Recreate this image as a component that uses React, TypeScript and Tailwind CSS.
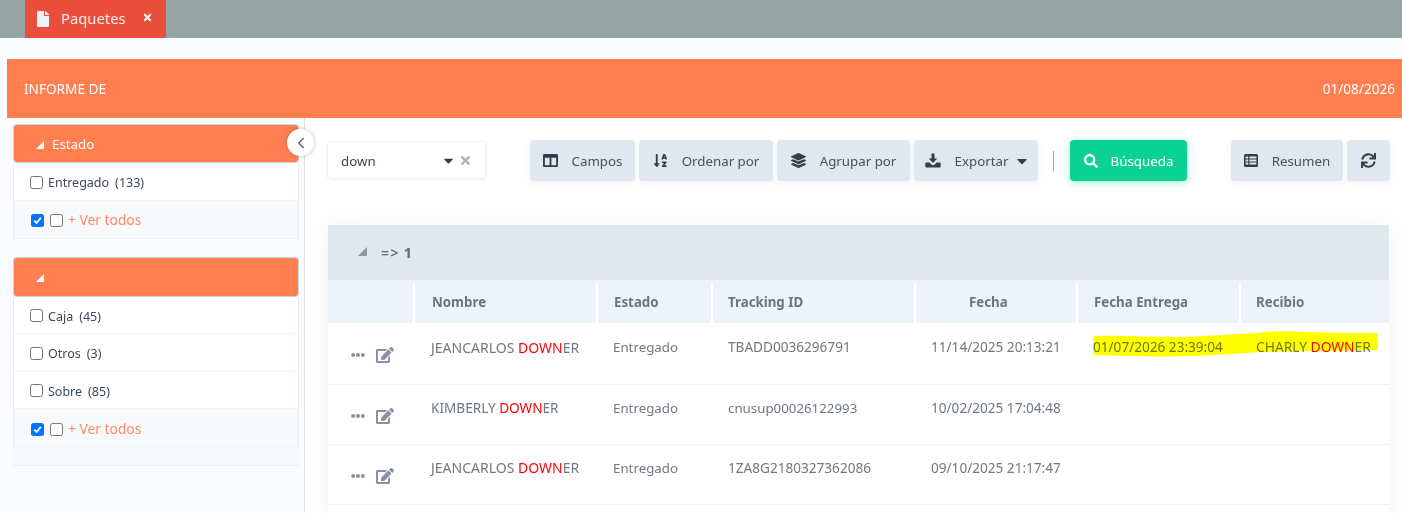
import { FaColumns, FaEdit, FaEllipsisH, FaFile, FaLayerGroup, FaSearch, FaSortAlphaDown, FaSync, FaTimes, FaCaretDown } from "react-icons/fa";
import { ChevronLeft } from "lucide-react";
import type { ReactNode } from "react";

const rows = [
  { pre: "JEANCARLOS ", id: "TBADD0036296791", date: "11/14/2025 20:13:21", entrega: "01/07/2026 23:39:04", recibio: true, h: "h-[62px]", textTop: "pt-[14px]", iconTop: "pt-[2px]", nameSize: "text-[14px]", idSize: "text-[13.6px]" },
  { pre: "KIMBERLY ", id: "cnusup00026122993", date: "10/02/2025 17:04:48", entrega: "", recibio: false, h: "h-[60px]", textTop: "pt-[13px]", iconTop: "pt-[2px]", nameSize: "text-[13.6px]", idSize: "text-[13.3px] mt-[1px]" },
  { pre: "JEANCARLOS ", id: "1ZA8G2180327362086", date: "09/10/2025 21:17:47", entrega: "", recibio: false, h: "h-[60px]", textTop: "pt-[13px]", iconTop: "pt-[3px]", nameSize: "text-[14px] -mt-[1px]", idSize: "text-[13.6px]" },
];

function Check() {
  return <span className="block w-[13px] h-[13px] shrink-0 rounded-[2.5px] border border-[#767676] bg-white" />;
}

function Checked() {
  return (
    <span className="flex items-center justify-center w-[13px] h-[13px] shrink-0 rounded-[2.5px] bg-[#0075ff]">
      <svg width="11" height="11" viewBox="0 0 12 12" fill="none" stroke="white" strokeWidth="2">
        <path d="M2.5 6.2 5 8.7 9.6 3.2" />
      </svg>
    </span>
  );
}

function Arrow() {
  return <span className="block w-0 h-0 border-l-[8px] border-l-transparent border-b-[8px] border-b-white" />;
}

function FilterItem({ label, count }: { label: string; count: string }) {
  return (
    <div className="flex items-center h-[37.5px] pl-[16px] pt-[2px] bg-white border-b border-[#eef1f6] text-[12.5px] text-[#3f4a5a]">
      <Check />
      <span className="ml-[5px] pt-[3px]">{label}</span>
      <span className="ml-[6px] pt-[3px]">({count})</span>
    </div>
  );
}

function VerTodos() {
  return (
    <div className="flex items-center h-[38px] pl-[17px] pt-[3px] bg-[#f8f9fb] border-b border-[#eef1f6] text-[13.8px] text-[#ff8a63]">
      <Checked />
      <span className="ml-[6px]"><Check /></span>
      <span className="ml-[5px]">+ Ver todos</span>
    </div>
  );
}

function PanelHead({ h, children }: { h: string; children?: ReactNode }) {
  return (
    <div className={`flex items-center gap-[8px] ${h} pl-[22px] pt-[3px] rounded-[4px] bg-[#ff7f50] border border-[#c9d3de] text-[13.3px] text-white`}>
      <Arrow />
      {children}
    </div>
  );
}

// tray with a dip under the arrow, the package has no icon like this one
function ExportIcon() {
  return (
    <svg className="block" width="16" height="15" viewBox="0 0 16 15" fill="#343d4c">
      <path d="M6.5 0.5h3v5h2.8L8 10 3.7 5.5h2.8z" />
      <path d="M1.5 9.5h3l2.2 2.2c.7.6 1.9.6 2.6 0l2.2-2.2h3c.8 0 1.2.5 1.2 1.2v2.6c0 .8-.5 1.2-1.2 1.2H1.5C.7 14.5.3 14 .3 13.3v-2.6c0-.7.4-1.2 1.2-1.2z" />
    </svg>
  );
}

// rounded table with a narrow left column and wide right column
function ResumenIcon() {
  return (
    <svg className="block" width="14" height="13" viewBox="0 0 14 13" fill="#343d4c">
      <path
        fillRule="evenodd"
        d="M1.5 0h11A1.5 1.5 0 0 1 14 1.5v10a1.5 1.5 0 0 1-1.5 1.5h-11A1.5 1.5 0 0 1 0 11.5v-10A1.5 1.5 0 0 1 1.5 0zM1.6 2.4v2h2.6v-2zM5.4 2.4v2h7v-2zM1.6 5.5v2h2.6v-2zM5.4 5.5v2h7v-2zM1.6 8.6v2h2.6v-2zM5.4 8.6v2h7v-2z"
      />
    </svg>
  );
}

function ToolButton({ icon, label, w, caret }: { icon: ReactNode; label: string; w: string; caret?: boolean }) {
  return (
    <button className={`flex items-center justify-center gap-[14px] h-[41px] ${w} rounded-[4px] bg-[#e1e7ee] text-[13.3px] text-[#465163] shadow-[0_2px_6px_rgba(80,100,130,0.08)]`}>
      <span className="text-[15px] text-[#343d4c]">{icon}</span>
      {label && <span className="pt-[3px]">{label}</span>}
      {caret && <FaCaretDown className="text-[16px] -ml-[8px] text-[#343d4c]" />}
    </button>
  );
}

export default function App() {
  return (
    <div className="relative h-[513px] w-[1402px] overflow-hidden bg-[#fbfcff] font-['Noto_Sans',sans-serif]">
      {/* Tabs */}
      <div className="h-[38px] bg-[#97a4a4] pl-[25px]">
        <div className="flex items-center h-[38px] w-[141px] bg-[#ea4e3c] text-[14.8px] text-[#f5ece8]">
          <FaFile className="ml-[10px] text-[16px] text-[#eef1f1]" />
          <span className="ml-[10px] -mt-[1px]">Paquetes</span>
          <FaTimes className="ml-[16px] -mt-[3px] text-[11px] text-white" />
        </div>
      </div>

      {/* Report header */}
      <div className="mt-[21px] ml-[7px] flex items-center justify-between h-[59px] bg-[#ff7f50] pl-[17px] pr-[7px] pt-[2px] text-[13.6px] text-white">
        <span>INFORME DE</span>
        <span>01/08/2026</span>
      </div>

      <div className="flex ml-[7px]">
        {/* Sidebar */}
        <aside className="relative w-[298px] h-[395px] shrink-0 border-r border-[#d9e1ea] pl-[6px] pr-[5px] pt-[6px]">
          <div className="w-[286px]">
            <PanelHead h="h-[39px]">Estado</PanelHead>
            <div className="border-x border-[#e6eaf0]">
              <FilterItem label="Entregado" count="133" />
              <VerTodos />
            </div>
          </div>
          <div className="w-[286px] mt-[18px] border-b border-[#eef1f6] bg-[#f8f9fb] pb-[18px]">
            <PanelHead h="h-[40px]" />
            <div className="border-x border-[#e6eaf0]">
              <FilterItem label="Caja" count="45" />
              <FilterItem label="Otros" count="3" />
              <FilterItem label="Sobre" count="85" />
              <VerTodos />
            </div>
          </div>
          <button className="absolute top-[11px] -right-[10px] flex items-center justify-center w-[27px] h-[27px] rounded-full bg-white shadow-[0_0_4px_rgba(60,80,110,0.35)] text-[#5c6878]">
            <ChevronLeft size={18} strokeWidth={2} />
          </button>
        </aside>

        {/* Main */}
        <main className="flex-1 h-[395px] bg-white pl-[22px]">
          <div className="flex items-start h-[107px] pt-[22px]">
            <div className="flex items-center w-[159px] h-[38px] mt-[1px] rounded-[4px] border border-[#f0f2f6] bg-white pl-[13px] pr-[13px] text-[13.3px] text-[#3b4656] shadow-[0_1px_3px_rgba(80,100,130,0.08)]">
              <span className="flex-1 pt-[3px]">down</span>
              <FaCaretDown className="text-[15px] text-[#2f3947]" />
              <FaTimes className="ml-[3px] text-[13px] text-[#aab4c2]" />
            </div>
            <div className="flex gap-[4px] ml-[44px]">
              <ToolButton icon={<FaColumns />} label="Campos" w="w-[105px]" />
              <ToolButton icon={<FaSortAlphaDown />} label="Ordenar por" w="w-[134px]" />
              <ToolButton icon={<FaLayerGroup />} label="Agrupar por" w="w-[133px]" />
              <ToolButton icon={<ExportIcon />} label="Exportar" w="w-[124px] pl-[3px]" caret />
            </div>
            <span className="w-px h-[20px] mt-[11px] ml-[15px] bg-[#a9adb3]" />
            <button className="flex items-center justify-center gap-[13px] ml-[16px] w-[117px] h-[41px] rounded-[4px] bg-[#0ad295] text-[13.3px] text-white shadow-[0_2px_8px_rgba(10,210,149,0.35)]">
              <FaSearch className="text-[14px]" />
              <span className="pt-[2px]">Búsqueda</span>
            </button>
            <div className="flex gap-[4px] ml-[44px]">
              <ToolButton icon={<ResumenIcon />} label="Resumen" w="w-[112px]" />
              <ToolButton icon={<FaSync />} label="" w="w-[43px]" />
            </div>
          </div>

          <div className="relative w-[1061px] ml-[1px] shadow-[0_0_24px_rgba(0,0,0,0.05)]">
            {/* Group header */}
            <div className="flex items-center h-[55px] pl-[30px] pt-[1px] bg-[#e1e7ee] text-[#5d6878]">
              <span className="block -mt-[3px] w-0 h-0 border-l-[9px] border-l-transparent border-b-[9px] border-b-[#8d98a8]" />
              <span className="ml-[14px] text-[13.8px] font-semibold tracking-[1.5px]">=&gt;</span>
              <span className="ml-[4px] text-[14.5px] font-bold">1</span>
            </div>

            {/* Table head */}
            <div className="flex h-[43px] pt-[3px] bg-[#eef2fa] text-[13.3px] font-bold text-[#6d7480]">
              <div className="w-[87px] border-r-2 border-white" />
              <div className="w-[183px] flex items-center pl-[17px] border-r-2 border-white">Nombre</div>
              <div className="w-[115px] flex items-center pl-[16px] border-r-2 border-white">Estado</div>
              <div className="w-[203px] flex items-center pl-[15px] border-r-2 border-white">Tracking ID</div>
              <div className="w-[162px] flex items-center pl-[53px] border-r-2 border-white">Fecha</div>
              <div className="w-[163px] flex items-center pl-[16px] border-r-2 border-white">Fecha Entrega</div>
              <div className="flex-1 flex items-center pl-[15px]">Recibio</div>
            </div>

            {/* Rows */}
            {rows.map((r) => (
              <div key={r.id} className={`flex ${r.h} bg-white border-b border-[#eef1f6] text-[13.6px] text-[#6f7885]`}>
                <div className={`w-[87px] flex items-center pl-[23px] ${r.iconTop} text-[#8792a3]`}>
                  <FaEllipsisH className="text-[14px]" />
                  <FaEdit className="ml-[11px] text-[18px]" />
                </div>
                <div className={`w-[183px] pl-[16px] ${r.textTop} ${r.nameSize}`}>
                  {r.pre}<span className="text-[#ff0000]">DOWN</span>ER
                </div>
                <div className={`w-[115px] pl-[15px] mt-[1px] ${r.textTop} text-[13.3px]`}>Entregado</div>
                <div className={`w-[203px] pl-[15px] ${r.textTop} ${r.idSize}`}>{r.id}</div>
                <div className={`w-[162px] pl-[15px] ${r.textTop}`}>{r.date}</div>
                <div className={`w-[163px] pl-[15px] ${r.textTop}`}>{r.entrega}</div>
                <div className={`flex-1 pl-[15px] ${r.textTop} text-[13.8px]`}>
                  {r.recibio && <>CHARLY <span className="text-[#ff0000]">DOWN</span>ER</>}
                </div>
              </div>
            ))}
            <div className="h-[20px] bg-white" />

            {/* Yellow marker stroke drawn over the delivery cells */}
            <svg className="absolute left-[764px] top-[105px] mix-blend-multiply" width="290" height="30" viewBox="0 0 290 30">
              <path d="M1 6 C30 5 60 7 90 7 C110 6 130 5 165 3 C175 1 195 1 215 2 C240 3 265 3 286 3 L286 20 C250 21 200 21 168 22 C150 23 130 25 100 26 C70 27 30 26 1 25 Z" fill="#ffff00" />
            </svg>
          </div>
        </main>
      </div>
    </div>
  );
}
